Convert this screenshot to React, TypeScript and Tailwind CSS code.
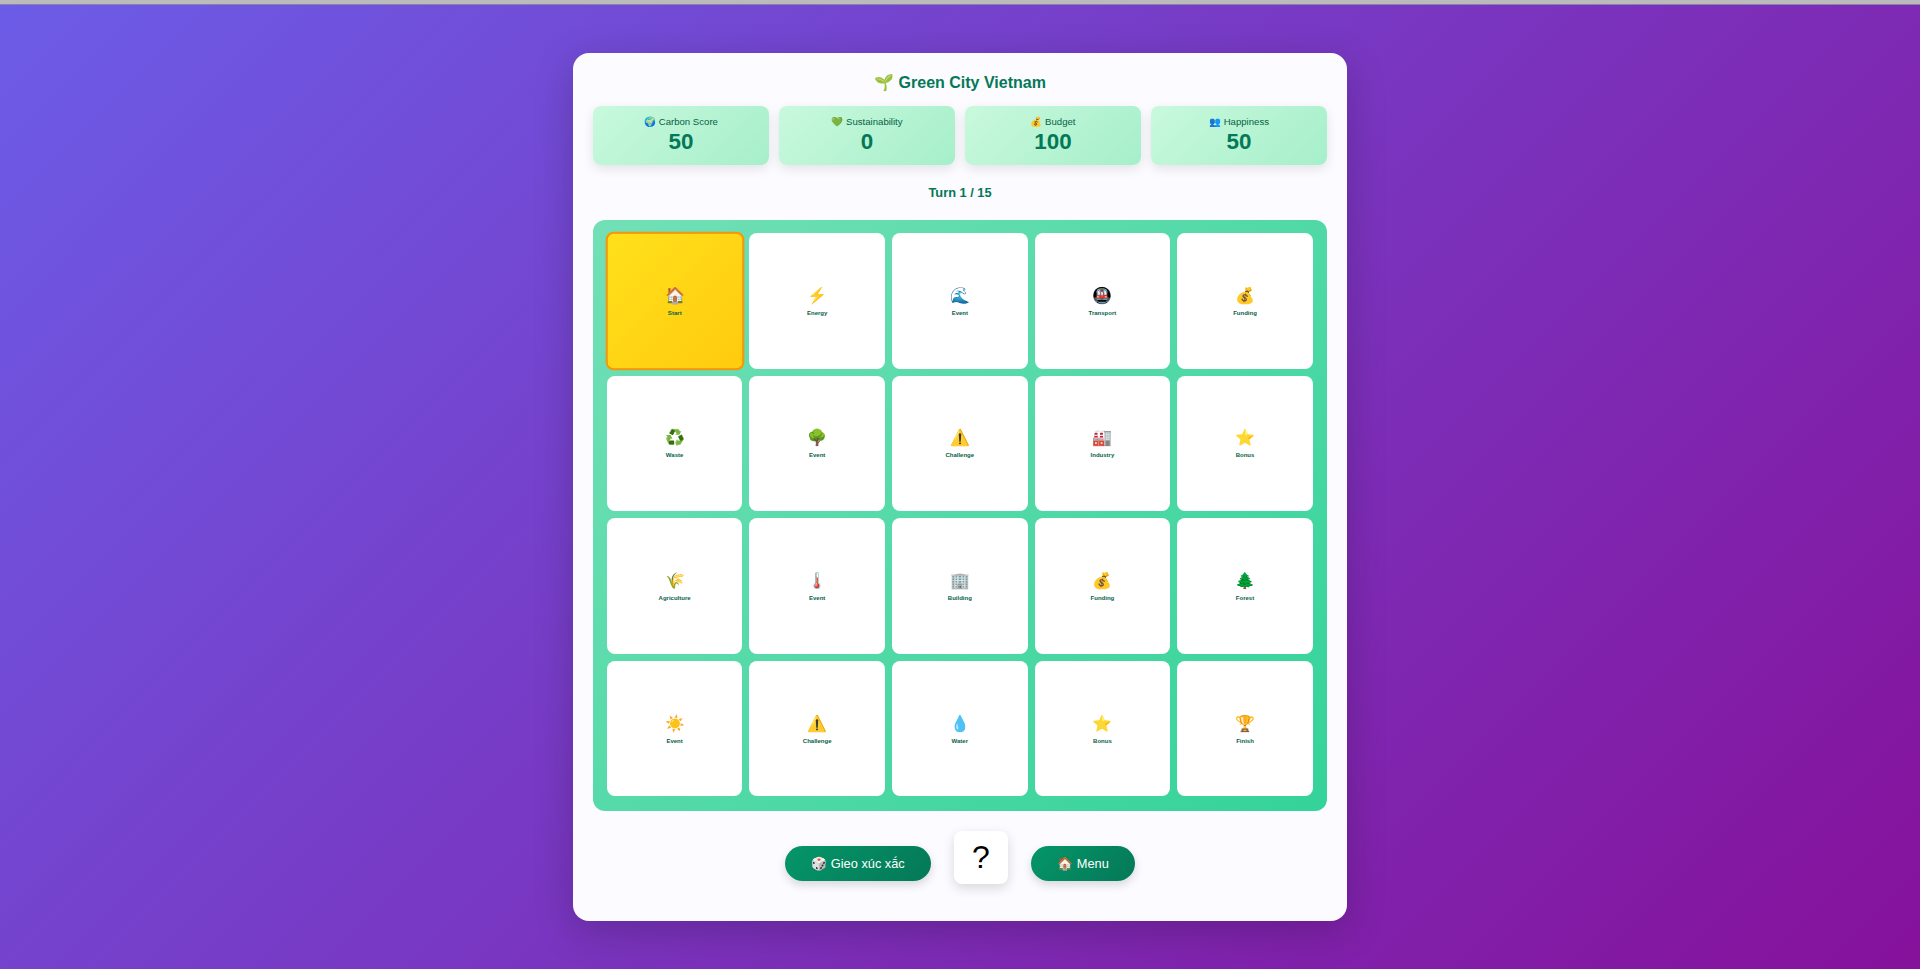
const stats = [
  { label: '🌍 Carbon Score', value: 50 },
  { label: '💚 Sustainability', value: 0 },
  { label: '💰 Budget', value: 100 },
  { label: '👥 Happiness', value: 50 },
];

const cells = [
  { icon: '🏠', name: 'Start' },
  { icon: '⚡', name: 'Energy' },
  { icon: '🌊', name: 'Event' },
  { icon: '🚇', name: 'Transport' },
  { icon: '💰', name: 'Funding' },
  { icon: '♻️', name: 'Waste' },
  { icon: '🌳', name: 'Event' },
  { icon: '⚠️', name: 'Challenge' },
  { icon: '🏭', name: 'Industry' },
  { icon: '⭐', name: 'Bonus' },
  { icon: '🌾', name: 'Agriculture' },
  { icon: '🌡️', name: 'Event' },
  { icon: '🏢', name: 'Building' },
  { icon: '💰', name: 'Funding' },
  { icon: '🌲', name: 'Forest' },
  { icon: '☀️', name: 'Event' },
  { icon: '⚠️', name: 'Challenge' },
  { icon: '💧', name: 'Water' },
  { icon: '⭐', name: 'Bonus' },
  { icon: '🏆', name: 'Finish' },
];

export default function App() {
  return (
    <div className="flex h-[969px] flex-col overflow-hidden bg-[linear-gradient(135deg,#6c5ce7_0%,#86119b_100%)] font-['Liberation_Sans',Arial,sans-serif]">
      <div className="h-[5px] border-b border-[#8a80a8] bg-[#bbbbbb]" />

      <div className="flex flex-1 items-start justify-center pt-[48px]">
        <div className="h-[868px] w-[774px] rounded-[16px] bg-[#fcfbff] p-5 shadow-[0_10px_40px_rgba(0,0,0,0.2)]">
          <h1 className="mb-[14px] text-center text-base leading-[19px] font-bold text-[#047857]">🌱 Green City Vietnam</h1>

          {/* 점수 카드 */}
          <div className="grid grid-cols-4 gap-[10px]">
            {stats.map((s) => (
              <div
                key={s.label}
                className="h-[59px] rounded-lg bg-[linear-gradient(135deg,#c9f9dd,#a6efca)] pt-[10px] text-center shadow-[0_4px_12px_rgba(0,0,0,0.1)]"
              >
                <div className="text-[9.6px] leading-[11px] text-[#065f46]">{s.label}</div>
                <div className="mt-[2px] text-[22.4px] leading-[25px] font-bold text-[#047857]">{s.value}</div>
              </div>
            ))}
          </div>

          <p className="mt-5 mb-5 text-center text-[12.8px] leading-[15px] font-bold text-[#047857]">Turn 1 / 15</p>

          {/* 보드 */}
          <div className="grid grid-cols-5 gap-[7px] rounded-xl bg-[linear-gradient(135deg,#72e0b6,#34d399)] pt-[13px] pr-[14.2px] pb-[14.4px] pl-[13.8px]">
            {cells.map((c, i) => (
              <div
                key={i}
                className={
                  i === 0
                    ? 'flex aspect-square scale-[1.02] flex-col items-center justify-center rounded-lg border-2 border-[#ff9300] bg-[linear-gradient(135deg,#ffe01b,#ffcb0e)] pt-[1px] text-[#065f46]'
                    : 'flex aspect-square flex-col items-center justify-center rounded-lg bg-white pt-[1px] text-[#065f46]'
                }
              >
                <div className="text-base leading-[19px]">{c.icon}</div>
                <div className="mt-[5px] text-[6px] leading-[7px] font-bold">{c.name}</div>
              </div>
            ))}
          </div>

          <div className="mt-5 flex items-baseline justify-center gap-[23px]">
            <button className="h-[35px] w-[146px] rounded-full bg-[linear-gradient(135deg,#059669,#047857)] text-[12.8px] text-white shadow-[0_4px_10px_rgba(0,0,0,0.15)]">
              🎲 Gieo xúc xắc
            </button>
            <div className="flex h-[53px] w-[54px] items-center justify-center rounded-lg bg-white text-[32px] text-black shadow-[0_4px_12px_rgba(0,0,0,0.15)]">
              ?
            </div>
            <button className="h-[35px] w-[104px] rounded-full bg-[linear-gradient(135deg,#059669,#047857)] text-[12.8px] text-white shadow-[0_4px_10px_rgba(0,0,0,0.15)]">
              🏠 Menu
            </button>
          </div>
        </div>
      </div>
    </div>
  );
}
